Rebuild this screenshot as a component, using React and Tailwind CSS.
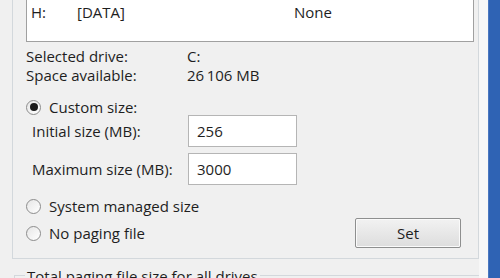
import { useState } from 'react';

function Radio({ checked, label, onClick }) {
  return (
    <button type="button" onClick={onClick} className="flex items-center gap-[8px] text-left">
      <span className="w-[15px] h-[15px] rounded-full border border-[#8c8c8c] bg-gradient-to-br from-[#e6e6e6] to-[#ffffff] flex items-center justify-center shrink-0">
        {checked && <span className="w-[8px] h-[8px] rounded-full bg-[#1a1a1a]" />}
      </span>
      <span>{label}</span>
    </button>
  );
}

export default function App() {
  const [mode, setMode] = useState('custom');
  const [initial, setInitial] = useState('256');
  const [maximum, setMaximum] = useState('3000');

  return (
    <div
      className="w-[500px] h-[278px] overflow-hidden flex bg-[#f0f0f0] text-[#1e1e1e] text-[15px]"
      style={{ fontFamily: '"Open Sans", "Noto Sans", sans-serif' }}
    >
      <div className="w-[479px] shrink-0 pl-[12px]">
        {/* Virtual memory group */}
        <div className="h-[259px] border-x border-b border-[#d3d8dc] pl-[13px] pr-[4px]">
          <div className="h-[42px] bg-white border-x border-b border-[#a0a0a0] flex items-start pt-[1px]">
            <span className="w-[50px] pl-[4px]">H:</span>
            <span className="w-[217px]">[DATA]</span>
            <span>None</span>
          </div>

          <div className="mt-[5px] grid grid-cols-[161px_1fr] leading-[19px]">
            <span>Selected drive:</span>
            <span>C:</span>
            <span>Space available:</span>
            <span>26{'\u2009'}106 MB</span>
          </div>

          <div className="mt-[14px] h-[16px] flex items-center">
            <Radio checked={mode === 'custom'} label="Custom size:" onClick={() => setMode('custom')} />
          </div>

          <div className="h-[32px] flex items-center">
            <span className="w-[162px] pl-[6px]">Initial size (MB):</span>
            <input
              value={initial}
              onChange={(e) => setInitial(e.target.value)}
              className="w-[109px] h-[32px] bg-white border border-[#b5b5b5] px-[8px] outline-none"
            />
          </div>

          <div className="mt-[6px] h-[32px] flex items-center">
            <span className="w-[162px] pl-[6px]">Maximum size (MB):</span>
            <input
              value={maximum}
              onChange={(e) => setMaximum(e.target.value)}
              className="w-[109px] h-[32px] bg-white border border-[#b5b5b5] px-[8px] outline-none"
            />
          </div>

          <div className="mt-[12px] h-[18px] flex items-center">
            <Radio checked={mode === 'system'} label="System managed size" onClick={() => setMode('system')} />
          </div>

          <div className="mt-[3px] h-[30px] flex items-center justify-between pr-[13px]">
            <Radio checked={mode === 'none'} label="No paging file" onClick={() => setMode('none')} />
            <button
              type="button"
              className="w-[106px] h-[30px] border border-[#8e8f8f] rounded-[2px] bg-gradient-to-b from-[#f2f2f2] to-[#dddddd] shadow-[inset_0_0_0_1px_#fafafa]"
            >
              Set
            </button>
          </div>
        </div>

        {/* Total paging file group (cut off) */}
        <div className="mt-[16px] ml-[2px] border-t border-l border-[#d3d8dc] h-[40px]">
          <span className="block -mt-[10px] ml-[10px] w-fit px-[2px] leading-[20px] bg-[#f0f0f0]">
            Total paging file size for all drives
          </span>
        </div>
      </div>

      <div className="w-[9px] shrink-0 bg-[#f7f7f7]" />
      <div className="flex-1 bg-[#2f63b4] border-l border-[#4a78c0]" />
    </div>
  );
}
